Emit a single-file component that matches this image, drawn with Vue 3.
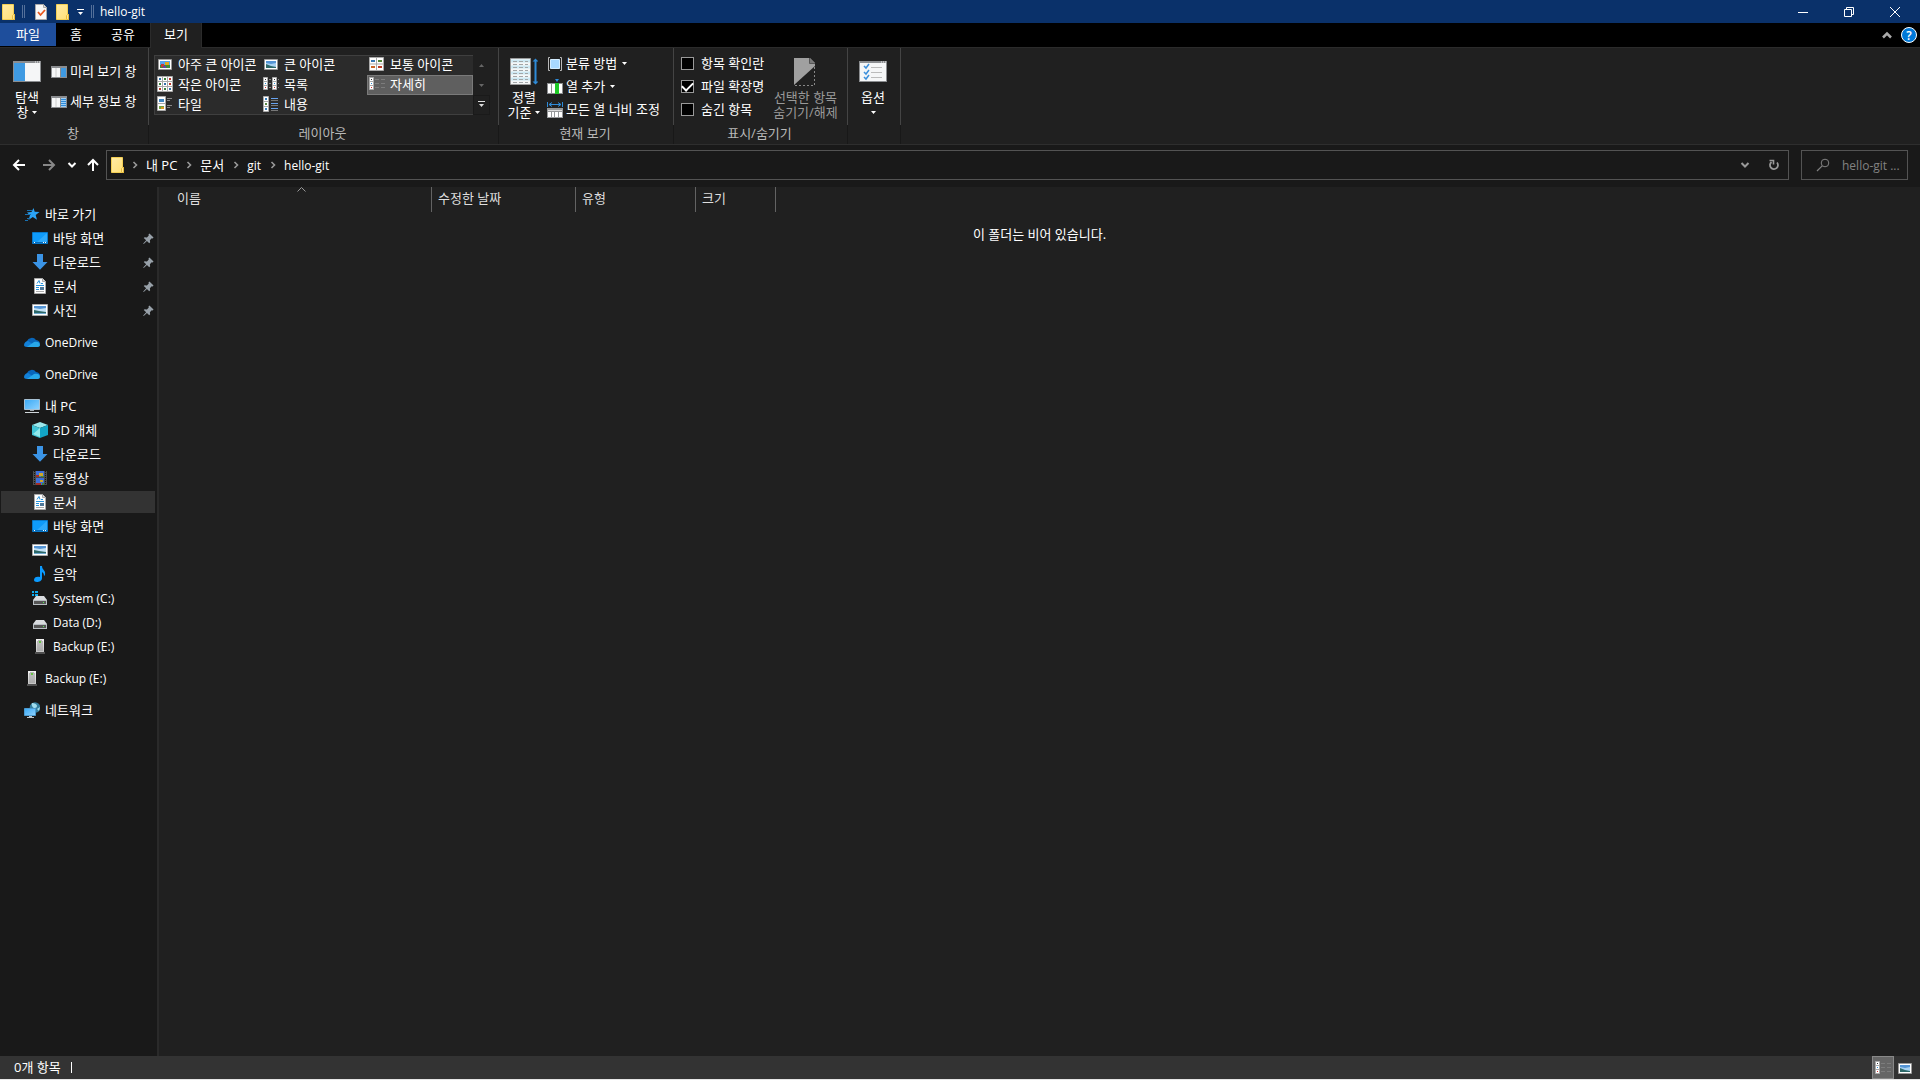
<script setup>
import { ref } from 'vue'

const tabs = ['파일', '홈', '공유', '보기']
const activeTab = ref('보기')

const layouts = [
  { name: '아주 큰 아이콘', icon: 'xl' },
  { name: '큰 아이콘', icon: 'large' },
  { name: '보통 아이콘', icon: 'medium' },
  { name: '작은 아이콘', icon: 'small' },
  { name: '목록', icon: 'list' },
  { name: '자세히', icon: 'details' },
  { name: '타일', icon: 'tiles' },
  { name: '내용', icon: 'content' },
]
const layout = ref('자세히')

const options = ref([
  { name: '항목 확인란', checked: false },
  { name: '파일 확장명', checked: true },
  { name: '숨긴 항목', checked: false },
])

const path = [
  { name: '내 PC' },
  { name: '문서' },
  { name: 'git', latin: true },
  { name: 'hello-git', latin: true },
]

const tree = [
  {
    name: '바로 가기',
    icon: 'star',
    children: [
      { name: '바탕 화면', icon: 'desktop', pinned: true },
      { name: '다운로드', icon: 'download', pinned: true },
      { name: '문서', icon: 'document', pinned: true },
      { name: '사진', icon: 'picture', pinned: true },
    ],
  },
  { name: 'OneDrive', icon: 'cloud', latin: true },
  { name: 'OneDrive', icon: 'cloud', latin: true },
  {
    name: '내 PC',
    icon: 'pc',
    children: [
      { name: '3D 개체', icon: 'cube' },
      { name: '다운로드', icon: 'download' },
      { name: '동영상', icon: 'video' },
      { name: '문서', icon: 'document', current: true },
      { name: '바탕 화면', icon: 'desktop' },
      { name: '사진', icon: 'picture' },
      { name: '음악', icon: 'music' },
      { name: 'System (C:)', icon: 'system', latin: true },
      { name: 'Data (D:)', icon: 'drive', latin: true },
      { name: 'Backup (E:)', icon: 'usb', latin: true },
    ],
  },
  { name: 'Backup (E:)', icon: 'usb', latin: true },
  { name: '네트워크', icon: 'network' },
]
</script>

<template>
  <svg class="sprite" aria-hidden="true">
    <defs>
      <linearGradient id="blue" x1="0" y1="0" x2="1" y2="1">
        <stop offset="0" stop-color="#3aa9f5" />
        <stop offset="1" stop-color="#8fd3ff" />
      </linearGradient>
      <linearGradient id="yellow" x1="0" y1="0" x2="1" y2="1">
        <stop offset="0" stop-color="#ffeba5" />
        <stop offset="1" stop-color="#ffdf75" />
      </linearGradient>
      <linearGradient id="metal" x1="0" y1="0" x2="0" y2="1">
        <stop offset="0" stop-color="#f4f4f4" />
        <stop offset="1" stop-color="#c4c4c4" />
      </linearGradient>
    </defs>
    <symbol id="folder" viewBox="0 0 16 16">
      <path d="M1.500 .5h11v10h1v5h-12z" fill="url(#yellow)" stroke="#f3cf55" />
      <path d="M11.500 15V11.500l1-1h1v5h-2" fill="#ffe694" stroke="#e8bb3a" />
    </symbol>
    <symbol id="check-doc" viewBox="0 0 16 16">
      <path d="M2.500 .5h8l3 3v12h-11z" fill="#f8f8f8" stroke="#aaa" />
      <path d="M10.500 .5v3h3" fill="#ddd" stroke="#aaa" />
      <path d="M5 8l2.500 3 4.500-5" fill="none" stroke="#e8571e" stroke-width="1.800" />
    </symbol>
    <symbol id="caret" viewBox="0 0 5 3"><path d="M0 0h5L2.500 3z" fill="currentColor" /></symbol>
    <symbol id="chevron-down" viewBox="0 0 10 10">
      <path d="M1.500 3l3.500 3.500L8.500 3" fill="none" stroke="currentColor" stroke-width="2" />
    </symbol>
    <symbol id="chevron-up" viewBox="0 0 10 10">
      <path d="M1 7.500l4-4 4 4" fill="none" stroke="currentColor" stroke-width="2.500" />
    </symbol>
    <symbol id="chevron-right" viewBox="0 0 10 10">
      <path d="M3.500 2l3 3-3 3" fill="none" stroke="currentColor" stroke-width="1.600" />
    </symbol>
    <symbol id="arrow" viewBox="0 0 14 14">
      <path d="M13 7H2M7 2L2 7l5 5" fill="none" stroke="currentColor" stroke-width="2" />
    </symbol>
    <symbol id="refresh" viewBox="0 0 12 12">
      <path d="M3.500 3a4 4 0 1 0 5.500 .5" fill="none" stroke="currentColor" stroke-width="1.800" />
      <path d="M1.500 1.500h4v4" fill="none" stroke="currentColor" stroke-width="1.600" />
    </symbol>
    <symbol id="search" viewBox="0 0 14 14">
      <circle cx="9" cy="5" r="3.800" fill="none" stroke="currentColor" />
      <path d="M6.200 7.800L1 13" stroke="currentColor" stroke-width="1.200" />
    </symbol>
    <symbol id="pin" viewBox="0 0 12 12">
      <path d="M7 .5l4.500 4.500-1 1-1-.2-2 2.200.3 2.200-1 1-2.500-2.500L.8 12l-.6-.6L3.500 8 .8 5.500l1-1 2.500.3 2-2L6 1.500z" fill="#98a1a9" />
    </symbol>

    <symbol id="nav-pane" viewBox="0 0 28 21">
      <path d="M0 0h28v21H0z" fill="#8b8d90" />
      <path d="M1 2h11v18H1z" fill="#3f9ae2" />
      <path d="M12 2h15v18H12z" fill="#f5f6f7" />
      <path d="M22 1h1M24 1h1M26 1h1" stroke="#eee" />
    </symbol>
    <symbol id="preview-pane" viewBox="0 0 16 12">
      <path d="M0 0h16v12H0z" fill="#8b8d90" />
      <path d="M1 2h4v9H1zM5 2h4v9H5z" fill="#f5f6f7" />
      <path d="M5 2v9" stroke="#ccc" />
      <path d="M10 2h5v9h-5z" fill="#3f9ae2" />
    </symbol>
    <symbol id="detail-pane" viewBox="0 0 16 12">
      <path d="M0 0h16v12H0z" fill="#8b8d90" />
      <path d="M1 2h4v9H1zM5 2h4v9H5z" fill="#f5f6f7" />
      <path d="M5 2v9" stroke="#ccc" />
      <path d="M10 2h5v9h-5z" fill="#9fd0f6" />
      <path d="M10 3.500h5M10 5.500h5M10 7.500h5M10 9.500h5" stroke="#2f8ad8" />
    </symbol>
    <symbol id="sort" viewBox="0 0 28 28">
      <path d="M.5 .5h20v26H.5z" fill="#f5f6f7" stroke="#9b9b9b" />
      <path d="M1 3h19M1 9h19M1 15h19M1 21h19" stroke="#cde9f4" stroke-width="3" />
      <path d="M3 3.500h15M3 6.500h15M3 9.500h15M3 12.500h15M3 15.500h15M3 18.500h15M3 21.500h15M3 24.500h15" stroke="#a2a6a8" stroke-dasharray="4 2" />
      <path d="M25.500 2v23" stroke="#2e8bd8" stroke-width="2" />
      <path d="M22.500 3.500l3-3 3 3zM22.500 23.500l3 3 3-3z" fill="#2e8bd8" />
    </symbol>
    <symbol id="group" viewBox="0 0 16 16">
      <path d="M3 1.500H1.500v13H3M13 1.500h1.500v13H13" fill="none" stroke="#b9b9b9" />
      <path d="M3.500 3.500h9v9h-9z" fill="#a8d8ff" stroke="#d3ecff" />
    </symbol>
    <symbol id="add-column" viewBox="0 0 16 16">
      <path d="M0 4h16v11H0z" fill="#8b8d90" />
      <path d="M1 5h3v9H1zM5 5h3v9H5zM12 5h3v9h-3z" fill="#fff" />
      <path d="M8 4h4v11H8z" fill="#20c927" />
      <path d="M8 0h4l-2 3z" fill="#2e8bd8" />
    </symbol>
    <symbol id="fit-columns" viewBox="0 0 16 16">
      <path d="M.5 0v5M15.500 0v5M2 2.500h12M5 .5l-3 2 3 2M11 .5l3 2-3 2" fill="none" stroke="#2e8bd8" />
      <path d="M0 6h16v10H0z" fill="#96989a" />
      <path d="M1 10h3v5H1zM5 10h2v5H5zM8 10h3v5H8zM12 10h3v5h-3z" fill="#fff" />
      <path d="M1 8.500h14" stroke="#ddd" />
    </symbol>
    <symbol id="hide-doc" viewBox="0 0 22 28">
      <path d="M0 0h16l5 5v3L0 27z" fill="#a0a0a0" />
      <path d="M15.500 0v5.500H21" fill="#777" stroke="#555" />
      <path d="M20.500 9v18M1 27.500h20" stroke="#888" stroke-dasharray="2 2" />
    </symbol>
    <symbol id="options" viewBox="0 0 28 21">
      <path d="M0 0h28v21H0z" fill="#8b8d90" />
      <path d="M1 2h26v18H1z" fill="#f5f6f7" />
      <path d="M5 5l2 2 3-4M5 11l2 2 3-4M5 16l2 2 3-4" fill="none" stroke="#3c8fdb" stroke-width="1.500" />
      <path d="M12 6.500h11M12 11.500h11M12 16.500h11" stroke="#bbb" />
      <path d="M22 1h1M24 1h1M26 1h1" stroke="#eee" />
    </symbol>

    <symbol id="xl" viewBox="0 0 16 16">
      <path d="M1.500 3.500h13v10h-13z" fill="#fff" stroke="#999" />
      <path d="M3 5h10v7H3z" fill="#58a4ee" />
      <path d="M3 9h10v3H3z" fill="#3f8b38" />
      <path d="M4 8h3v3H4z" fill="#cb3b32" />
      <path d="M8 6h4v3H8z" fill="#e4a91c" />
      <path d="M6 10h3v2H6z" fill="#6740a5" />
    </symbol>
    <symbol id="large" viewBox="0 0 16 16">
      <path d="M1.500 3.500h13v10h-13z" fill="#fff" stroke="#999" />
      <path d="M3 5h10v7H3z" fill="#a9d2f2" />
      <path d="M3 5h10v2L8 8 3 7z" fill="#5595d5" />
      <path d="M3 8l5 2 5 1v1H3z" fill="#2d6969" />
    </symbol>
    <symbol id="picture" viewBox="0 0 16 16">
      <path d="M.5 2.500h15v11H.5z" fill="#fff" stroke="#aaa" />
      <path d="M2 4h12v8H2z" fill="#c4e2f6" />
      <path d="M2 4h12v2L8 7 2 6z" fill="#5595d5" />
      <path d="M2 8l5 1 7 1v1H2z" fill="#2d6969" />
      <path d="M2 11h12v1H2z" fill="#6fa9cf" />
    </symbol>
    <symbol id="medium" viewBox="0 0 16 16">
      <path d="M.5 1.500h14v13H.5zM7.500 1v13M1 8h14" fill="#fff" stroke="#aaa" />
      <path d="M2 4h4v2H2z" fill="#3979b5" />
      <path d="M9 4h4v2H9z" fill="#528538" />
      <path d="M2 10h4v2H2z" fill="#cb6729" />
      <path d="M9 10h4v2H9z" fill="#b93c28" />
    </symbol>
    <symbol id="small" viewBox="0 0 16 16">
      <path d="M.5 .5h15v15H.5zM5.500 0v16M10.500 0v16M0 5.500h16M0 10.500h16" fill="#fff" stroke="#aaa" />
      <path d="M2 2h2v2H2zM7 7h2v2H7zM12 12h2v2h-2z" fill="#3270a5" />
      <path d="M7 2h2v2H7zM2 7h2v2H2zM7 12h2v2H7z" fill="#3a8139" />
      <path d="M12 2h2v2h-2zM12 7h2v2h-2zM2 12h2v2H2z" fill="#ba382c" />
    </symbol>
    <symbol id="list" viewBox="0 0 16 16">
      <path d="M.5 1.500h4v12h-4zM9.500 1.500h4v12h-4z" fill="#fff" stroke="#aaa" />
      <path d="M0 5.500h5M0 9.500h5M9 5.500h5M9 9.500h5" stroke="#aaa" />
      <path d="M2 3h1v1H2zM11 3h1v1h-1z" fill="#333" />
      <path d="M2 7h1v1H2zM11 7h1v1h-1z" fill="#298bd4" />
      <path d="M2 11h1v1H2zM11 11h1v1h-1z" fill="#d23030" />
      <path d="M6 3.500h2M6 7.500h2M6 11.500h2M15 3.500h1M15 7.500h1M15 11.500h1" stroke="#888" />
    </symbol>
    <symbol id="details" viewBox="0 0 16 16">
      <path d="M.5 1.500h4v12h-4zM0 5.500h5M0 9.500h5" fill="#fff" stroke="#aaa" />
      <path d="M2 3h1v1H2z" fill="#333" />
      <path d="M2 7h1v1H2z" fill="#298bd4" />
      <path d="M2 11h1v1H2z" fill="#d23030" />
      <path d="M6 3.500h4M12 3.500h4M6 7.500h4M12 7.500h4M6 11.500h4M12 11.500h4" stroke="#7c7c7c" />
    </symbol>
    <symbol id="tiles" viewBox="0 0 16 16">
      <path d="M.5 .5h8v14h-8zM0 7.500h9" fill="#fff" stroke="#aaa" />
      <path d="M2 3h5v3H2z" fill="#4187c2" />
      <path d="M2 10h5v3H2z" fill="#73a142" />
      <path d="M4 11h3v2H4z" fill="#dc9b26" />
      <path d="M10 2.500h5M10 4.500h3M10 9.500h5M10 11.500h3" stroke="#888" />
    </symbol>
    <symbol id="content" viewBox="0 0 16 16">
      <path d="M.5 .5h5v15h-5zM0 5.500h6M0 10.500h6" fill="#fff" stroke="#aaa" />
      <path d="M2 2h2v2H2zM2 12h2v2H2z" fill="#377fbe" />
      <path d="M2 7h2v2H2z" fill="#568643" />
      <path d="M8 2.500h7M8 7.500h7M8 12.500h7" stroke="#68a3ef" />
      <path d="M8 4.500h7M8 9.500h7M8 14.500h7" stroke="#777" />
    </symbol>

    <symbol id="star" viewBox="0 0 16 16">
      <path d="M9.500 2l1.200 3.800 4.800.2-3.800 3 1.300 4.800-4.200-2.800L4.500 14l1.500-4.800L3 6.500l4.500-.5z" fill="#2ba4f7" />
      <path d="M3 4.500h5M1 8.500h6M3 12.500h3M1 14.500h3" stroke="#1870b0" />
    </symbol>
    <symbol id="desktop" viewBox="0 0 16 16">
      <path d="M.5 2.500h15v11H.5z" fill="#0f9bfa" stroke="#0878c9" />
      <path d="M15 3L5 12h10z" fill="#2eaafc" />
      <path d="M1 12.500h14" stroke="#0869b5" />
      <path d="M2 12.500h1M11 12.500h1M13 12.500h1" stroke="#fff" />
    </symbol>
    <symbol id="download" viewBox="0 0 16 16">
      <path d="M5 0h6v8h4.500L8 15.800.5 8H5z" fill="#3b94e6" />
    </symbol>
    <symbol id="document" viewBox="0 0 16 16">
      <path d="M2.500 .5h8l3 3v12h-11z" fill="#fff" stroke="#aaa" />
      <path d="M10.500 .5v3h3" fill="#ddd" stroke="#aaa" />
      <path d="M5 5.500l2-3 1 3M9 5.500h2M4 7.500h8M4 9.500h3M4 11.500h3" fill="none" stroke="#2793dc" />
      <path d="M4 13.500h8" stroke="#aaa" />
      <path d="M8 9h4v3H8z" fill="#51799a" />
    </symbol>
    <symbol id="cloud" viewBox="0 0 16 16">
      <path d="M3 7a5 4.500 0 0 1 9-1c3 .5 4 2 4 4L7 13z" fill="#0866bb" />
      <path d="M0 11c0-2 2-4 4-4l9 6H3c-2 0-3-1-3-2z" fill="#1280d8" />
      <path d="M3 13l7-5c3-1 6 0 6 3 0 1-1 2-2 2z" fill="#28a8ea" />
    </symbol>
    <symbol id="pc" viewBox="0 0 16 16">
      <path d="M.5 1.500h15v10H.5z" fill="url(#blue)" stroke="#a7c1d4" />
      <path d="M6 12h4v1H6z" fill="#a5adb3" />
      <path d="M1 14.500h14" stroke="#cfd5d9" />
    </symbol>
    <symbol id="cube" viewBox="0 0 16 16">
      <path d="M8 0l8 3-8 3-8-3z" fill="#9ae8ec" />
      <path d="M0 3l8 3v10l-8-3z" fill="#40c5d6" />
      <path d="M16 3L8 6v10l8-3z" fill="#12a4c5" />
      <path d="M1 12l7-6v9z" fill="#92e9eb" />
    </symbol>
    <symbol id="video" viewBox="0 0 16 16">
      <path d="M1 1h14v14H1z" fill="#4c4c4c" />
      <path d="M2.500 1v14M13.500 1v14" stroke="#141414" stroke-dasharray="1 1" />
      <path d="M4 1h8v6H4zM4 8h8v7H4z" fill="#3d6fd8" />
      <path d="M4 5h3v2H4zM4 13h5v2H4z" fill="#a52d27" />
      <path d="M7 3h4v3H7zM8 10h3v2H8z" fill="#d0a727" />
      <path d="M9 6h3v1H9zM10 13h2v2h-2z" fill="#3f8b38" />
    </symbol>
    <symbol id="music" viewBox="0 0 16 16">
      <path d="M8 0h2c0 4 4 4 3 9l-1 1c0-3-1-3-2-4v6c0 3-3 4-5 4s-3-1-3-2c0-3 3-4 6-3z" fill="#0b9bff" />
    </symbol>
    <symbol id="drive" viewBox="0 0 16 16">
      <path d="M4 6h8l3 4H1z" fill="#d9dcdf" />
      <path d="M1 10h14v5H1z" fill="#b8bec2" />
      <path d="M2 11h12v3H2z" fill="#555" />
      <path d="M11 12h1v1h-1z" fill="#55f055" />
    </symbol>
    <symbol id="system" viewBox="0 0 16 16">
      <path d="M4 6h8l3 4H1z" fill="#d9dcdf" />
      <path d="M1 10h14v5H1z" fill="#b8bec2" />
      <path d="M2 11h12v3H2z" fill="#555" />
      <path d="M11 12h1v1h-1z" fill="#55f055" />
      <path d="M0 1h2v2H0zM3 1h3v2H3zM0 4h2v2H0zM3 4h3v2H3z" fill="#10aef2" />
    </symbol>
    <symbol id="usb" viewBox="0 0 16 16">
      <path d="M4 1h8v13H4z" fill="url(#metal)" />
      <path d="M6 13V4M8 13V5M10 13V4" fill="none" stroke="#909090" />
      <path d="M6 2h4v1h1v2h-1V4H6v1H5V3h1z" fill="#b5b5b5" />
      <path d="M7 3h2v2H7z" fill="#65c342" />
      <path d="M3 15h10" stroke="#888" />
    </symbol>
    <symbol id="network" viewBox="0 0 16 16">
      <circle cx="11" cy="5.500" r="5.300" fill="#347e9e" />
      <path d="M8 1c2 0 5 1 5 3s-2 2-3 2-3-3-2-5zM13 7l3-2-1 4z" fill="#a0dcee" />
      <path d="M.5 6.500h11v7H.5z" fill="url(#blue)" stroke="#4b9bd1" />
      <path d="M5 14h3v1h2v1H3v-1h2z" fill="#bcc6cc" />
    </symbol>
  </svg>

  <div class="explorer">
    <header class="titlebar">
      <svg class="icon"><use href="#folder" /></svg>
      <span class="grip"></span>
      <button class="quick" aria-label="속성"><svg class="icon"><use href="#check-doc" /></svg></button>
      <button class="quick" aria-label="새 폴더"><svg class="icon"><use href="#folder" /></svg></button>
      <button aria-label="빠른 실행 도구 모음 사용자 지정">
        <svg viewBox="0 0 7 6" width="7" height="6"><path d="M0 .5h7" stroke="#fff" /><path d="M1 3h5L3.500 6z" fill="#fff" /></svg>
      </button>
      <span class="grip last"></span>
      <h1 class="title latin">hello-git</h1>
      <div class="window-buttons">
        <button aria-label="최소화"><svg viewBox="0 0 10 10"><path d="M0 5.500h10" /></svg></button>
        <button aria-label="이전 크기로 복원"><svg viewBox="0 0 10 10"><path d="M.5 2.500h7v7h-7zM2.500 2V.5h7v7H8" /></svg></button>
        <button aria-label="닫기"><svg viewBox="0 0 10 10"><path d="M0 0l10 10M10 0L0 10" /></svg></button>
      </div>
    </header>

    <nav class="tabs">
      <button
        v-for="tab in tabs"
        :key="tab"
        class="tab"
        :class="{ file: tab === '파일', active: tab === activeTab }"
        @click="activeTab = tab"
      >
        {{ tab }}
      </button>
      <div class="tab-tools">
        <button aria-label="리본 최소화"><svg class="tiny"><use href="#chevron-up" /></svg></button>
        <button class="help" aria-label="도움말">?</button>
      </div>
    </nav>

    <section class="ribbon">
      <div class="group group-panes">
        <div class="group-body">
          <button class="big">
            <span class="big-icon"><svg width="28" height="21"><use href="#nav-pane" /></svg></span>
            <span>탐색</span>
            <span>창 <svg class="caret"><use href="#caret" /></svg></span>
          </button>
          <div class="stack panes">
            <button class="small"><svg width="16" height="12"><use href="#preview-pane" /></svg>미리 보기 창</button>
            <button class="small"><svg width="16" height="12"><use href="#detail-pane" /></svg>세부 정보 창</button>
          </div>
        </div>
        <p class="group-label">창</p>
      </div>

      <div class="group group-layout">
        <div class="group-body">
          <div class="gallery">
            <button
              v-for="item in layouts"
              :key="item.name"
              class="layout"
              :class="{ selected: item.name === layout }"
              @click="layout = item.name"
            >
              <svg class="icon"><use :href="'#' + item.icon" /></svg>{{ item.name }}
            </button>
          </div>
          <div class="gallery-scroll">
            <button class="flip" aria-label="위로"><svg class="caret"><use href="#caret" /></svg></button>
            <button aria-label="아래로"><svg class="caret"><use href="#caret" /></svg></button>
            <button class="more" aria-label="자세히">
              <svg viewBox="0 0 7 6" width="7" height="6"><path d="M0 .5h7" stroke="#ddd" /><path d="M1 3h5L3.500 6z" fill="#ddd" /></svg>
            </button>
          </div>
        </div>
        <p class="group-label">레이아웃</p>
      </div>

      <div class="group group-view">
        <div class="group-body">
          <button class="big">
            <span class="big-icon"><svg width="28" height="28"><use href="#sort" /></svg></span>
            <span>정렬</span>
            <span>기준 <svg class="caret"><use href="#caret" /></svg></span>
          </button>
          <div class="stack">
            <button class="small"><svg class="icon"><use href="#group" /></svg>분류 방법 <svg class="caret"><use href="#caret" /></svg></button>
            <button class="small"><svg class="icon"><use href="#add-column" /></svg>열 추가 <svg class="caret"><use href="#caret" /></svg></button>
            <button class="small"><svg class="icon"><use href="#fit-columns" /></svg>모든 열 너비 조정</button>
          </div>
        </div>
        <p class="group-label">현재 보기</p>
      </div>

      <div class="group group-show">
        <div class="group-body">
          <div class="stack">
            <label v-for="option in options" :key="option.name" class="check">
              <input v-model="option.checked" type="checkbox" />{{ option.name }}
            </label>
          </div>
          <button class="big" disabled>
            <span class="big-icon"><svg width="22" height="28"><use href="#hide-doc" /></svg></span>
            <span>선택한 항목</span>
            <span>숨기기/해제</span>
          </button>
        </div>
        <p class="group-label">표시/숨기기</p>
      </div>

      <div class="group group-options">
        <div class="group-body">
          <button class="big">
            <span class="big-icon"><svg width="28" height="21"><use href="#options" /></svg></span>
            <span>옵션</span>
            <span><svg class="caret"><use href="#caret" /></svg></span>
          </button>
        </div>
      </div>
    </section>

    <div class="navbar">
      <div class="history">
        <button aria-label="뒤로"><svg class="arrow"><use href="#arrow" /></svg></button>
        <button aria-label="앞으로" disabled><svg class="arrow forward"><use href="#arrow" /></svg></button>
        <button class="recent" aria-label="최근 위치"><svg class="tiny"><use href="#chevron-down" /></svg></button>
        <button class="parent" aria-label="위로"><svg class="arrow up"><use href="#arrow" /></svg></button>
      </div>
      <div class="address">
        <svg class="icon"><use href="#folder" /></svg>
        <div class="crumbs">
          <template v-for="part in path" :key="part.name">
            <span class="crumb-sep"><svg class="tiny"><use href="#chevron-right" /></svg></span>
            <a href="#" class="crumb" :class="{ latin: part.latin }">{{ part.name }}</a>
          </template>
        </div>
        <div class="address-tools">
          <button aria-label="이전 위치"><svg class="tiny"><use href="#chevron-down" /></svg></button>
          <button aria-label="새로 고침"><svg width="12" height="12"><use href="#refresh" /></svg></button>
        </div>
      </div>
      <label class="search">
        <svg width="14" height="14"><use href="#search" /></svg>
        <input class="latin" type="text" placeholder="hello-git ..." aria-label="hello-git 검색" />
      </label>
    </div>

    <main class="body">
      <aside class="sidebar">
        <ul v-for="(root, i) in tree" :key="i" class="branch">
          <li>
            <a href="#" class="node" :class="{ latin: root.latin }">
              <svg class="icon"><use :href="'#' + root.icon" /></svg>{{ root.name }}
            </a>
          </li>
          <li v-for="child in root.children" :key="child.name">
            <a href="#" class="node child" :class="{ latin: child.latin, current: child.current }">
              <svg class="icon"><use :href="'#' + child.icon" /></svg>{{ child.name }}
              <svg v-if="child.pinned" class="pin"><use href="#pin" /></svg>
            </a>
          </li>
        </ul>
      </aside>

      <section class="files">
        <table class="columns">
          <thead>
            <tr>
              <th class="col-name">
                이름
                <svg class="sort-mark" viewBox="0 0 9 5"><path d="M.5 4.500l4-4 4 4" /></svg>
              </th>
              <th class="col-date">수정한 날짜</th>
              <th class="col-type">유형</th>
              <th class="col-size">크기</th>
            </tr>
          </thead>
        </table>
        <p class="empty">이 폴더는 비어 있습니다.</p>
      </section>
    </main>

    <footer class="statusbar">
      <span class="count">0개 항목</span>
      <span class="divider"></span>
      <div class="view-switch">
        <button class="selected" aria-label="자세히"><svg class="icon"><use href="#details" /></svg></button>
        <button aria-label="큰 아이콘"><svg class="icon"><use href="#large" /></svg></button>
      </div>
    </footer>
  </div>
</template>

<style>
body {
  margin: 0;
  background: #202020;
}
</style>

<style scoped>
.sprite {
  position: absolute;
  width: 0;
  height: 0;
}

.explorer {
  display: flex;
  flex-direction: column;
  min-height: 100vh;
  box-sizing: border-box;
  border-bottom: 1px solid #e6e6e6;
  background: #202020;
  color: #fff;
  font-family: 'Open Sans', 'Noto Sans CJK KR', sans-serif;
  font-size: 13px;
  line-height: 15px;
}

.explorer * {
  box-sizing: border-box;
}

.latin {
  font-size: 12px;
}

button {
  display: flex;
  align-items: center;
  justify-content: center;
  margin: 0;
  padding: 0;
  border: 0;
  background: none;
  color: inherit;
  font: inherit;
  white-space: nowrap;
}

a {
  color: inherit;
  text-decoration: none;
}

svg {
  flex: none;
}

.icon {
  width: 16px;
  height: 16px;
}

.tiny {
  width: 10px;
  height: 10px;
}

.caret {
  width: 5px;
  height: 3px;
}

/* title bar */
.titlebar {
  display: flex;
  align-items: center;
  height: 23px;
  padding-left: 1px;
  background: #0a316a;
}

.grip {
  width: 3px;
  height: 13px;
  margin: 0 8px 0 5px;
  border: solid #54709a;
  border-width: 0 1px;
}

.grip.last {
  margin: 0 6px 0 7px;
}

.quick {
  margin-right: 6px;
}

.title {
  margin: 0;
  font-weight: 400;
}

.window-buttons {
  display: flex;
  margin: 0 2px 0 auto;
}

.window-buttons button {
  width: 46px;
  height: 21px;
}

.window-buttons svg {
  width: 10px;
  height: 10px;
  overflow: visible;
  fill: none;
  stroke: #fff;
}

/* tabs */
.tabs {
  display: flex;
  height: 25px;
  background: #000;
  border-bottom: 1px solid #2b2b2b;
}

.tab {
  width: 54px;
  height: 23px;
}

.tab:nth-child(2) {
  width: 40px;
}

.tab.file {
  width: 56px;
  background: #1e4e9c;
}

.tab.active {
  width: 52px;
  height: 25px;
  padding-bottom: 2px;
  border: solid #2b2b2b;
  border-width: 0 1px;
  background: #202020;
}

.tab-tools {
  display: flex;
  align-items: center;
  gap: 9px;
  margin: 0 3px 0 auto;
  color: #aaa;
}

.help {
  width: 16px;
  height: 16px;
  border: 1px solid #fff;
  border-radius: 50%;
  background: #0078d7;
  color: #fff;
  font-size: 12px;
  font-weight: 600;
}

/* ribbon */
.ribbon {
  display: flex;
  height: 97px;
  border-bottom: 1px solid #2e2e2e;
}

.group {
  display: flex;
  flex-direction: column;
  padding-top: 2px;
  border-right: 1px solid;
  border-image: linear-gradient(#444 76px, #181818 76px) 1;
}

.group-panes {
  width: 149px;
}

.group-layout {
  width: 350px;
}

.group-view {
  width: 175px;
}

.group-show {
  width: 174px;
}

.group-options {
  width: 53px;
}

.group-body {
  display: flex;
  height: 76px;
  padding: 5px 0 0 8px;
}

.group-view .group-body {
  padding-left: 6px;
}

.group-options .group-body {
  justify-content: center;
  padding: 5px 2px 0 0;
}

.group-label {
  margin: 0;
  padding-right: 2px;
  text-align: center;
  color: #b8b8b8;
}

.big {
  flex-direction: column;
  justify-content: flex-start;
  min-width: 38px;
}

.big:disabled {
  margin-left: 9px;
  color: #999;
}

.big span {
  display: flex;
  align-items: center;
  gap: 4px;
  height: 15px;
}

.big .big-icon {
  justify-content: center;
  height: 35px;
  padding-bottom: 2px;
}

.stack {
  display: flex;
  flex-direction: column;
  align-items: flex-start;
  padding-left: 4px;
}

.small {
  gap: 3px;
  height: 23px;
  margin-top: -3px;
  margin-bottom: 3px;
}

.small .caret {
  margin-left: 2px;
}

.stack.panes {
  gap: 7px;
  padding-top: 8px;
  padding-left: 5px;
}

.check {
  display: flex;
  align-items: center;
  gap: 7px;
  height: 23px;
  margin-top: -3px;
  margin-bottom: 3px;
  white-space: nowrap;
}

.group-show .group-body {
  padding-left: 3px;
}

.check input {
  display: grid;
  place-content: center;
  width: 13px;
  height: 13px;
  margin: 0;
  border: 1px solid #999;
  background: #000;
  appearance: none;
}

.check input:checked::after {
  content: '';
  width: 5px;
  height: 9px;
  margin-bottom: 2px;
  border: solid #fff;
  border-width: 0 2px 2px 0;
  transform: rotate(45deg);
}

.group-layout .group-body {
  padding-left: 5px;
}

.gallery {
  display: grid;
  grid-template-columns: repeat(3, 106px);
  grid-auto-rows: 20px;
  height: 60px;
  border: 1px solid #3f3f3f;
  border-right: 0;
  background: #2b2b2b;
}

.layout {
  justify-content: flex-start;
  gap: 5px;
  height: 20px;
  margin-top: -1px;
  padding-left: 2px;
  padding-bottom: 2px;
}

.layout.selected {
  border: 1px solid #7a7a7a;
  background: #5f5f5f;
  padding-left: 1px;
}

.gallery-scroll {
  display: flex;
  flex-direction: column;
  color: #666;
}

.gallery-scroll button {
  width: 17px;
  height: 20px;
}

.gallery-scroll .flip svg {
  transform: rotate(180deg);
}

.gallery-scroll .more {
  padding-bottom: 2px;
  border: 1px solid #1a1a1a;
}

/* address row */
.navbar {
  display: flex;
  align-items: center;
  height: 42px;
  padding-bottom: 2px;
  padding-right: 12px;
  background: #191919;
}

.history {
  display: flex;
  align-items: center;
  width: 106px;
  padding-left: 12px;
}

.arrow {
  width: 14px;
  height: 14px;
}

.history button:disabled {
  margin-left: 16px;
  color: #888;
}

.forward {
  transform: rotate(180deg);
}

.up {
  transform: rotate(90deg);
}

.recent {
  margin-left: 11px;
}

.parent {
  margin-left: 9px;
}

.address {
  display: flex;
  flex: 1;
  align-items: center;
  height: 30px;
  padding-left: 3px;
  border: 1px solid #535353;
}

.crumbs {
  display: flex;
  align-items: center;
  margin-left: -2px;
}

.crumb-sep {
  display: flex;
  justify-content: center;
  width: 22px;
  color: #999;
}

.crumb {
  margin-right: 1px;
}

.address-tools {
  display: flex;
  align-self: stretch;
  margin-left: auto;
  color: #999;
}

.address-tools button {
  width: 29px;
}

.search {
  display: flex;
  align-items: center;
  width: 107px;
  height: 30px;
  margin-left: 12px;
  padding-left: 14px;
  border: 1px solid #535353;
  color: #828282;
}

.search input {
  width: 70px;
  margin-left: 12px;
  padding: 0;
  border: 0;
  outline: 0;
  background: none;
  color: #fff;
  font-family: inherit;
}

.search input::placeholder {
  color: #828282;
  opacity: 1;
}

/* content */
.body {
  display: flex;
  flex: 1;
}

.sidebar {
  width: 159px;
  padding-top: 15px;
  border-right: 2px solid #2a2a2a;
  background: #191919;
}

.branch {
  margin: 0 0 8px;
  padding: 0;
  list-style: none;
}

.branch li {
  height: 24px;
  padding-top: 1px;
}

.node {
  display: flex;
  align-items: center;
  gap: 5px;
  height: 22px;
  margin: 0 2px 0 1px;
  padding-left: 23px;
}

.node.child {
  padding-left: 31px;
}

.node.current {
  background: #333;
}

.pin {
  width: 11px;
  height: 11px;
  margin: 0 1px 0 auto;
}

.files {
  flex: 1;
}

.columns {
  table-layout: fixed;
  width: 604px;
  margin-left: 13px;
  border-collapse: separate;
  border-spacing: 0;
}

.columns th {
  position: relative;
  height: 25px;
  padding: 0 0 2px 6px;
  border-right: 1px solid #636363;
  color: #dedede;
  font-weight: 400;
  text-align: left;
}

.columns .col-name {
  width: 260px;
  padding-left: 5px;
}

.col-date {
  width: 144px;
}

.col-type {
  width: 120px;
}

.col-size {
  width: 80px;
}

.sort-mark {
  position: absolute;
  top: 0;
  left: 125px;
  width: 9px;
  height: 5px;
  fill: none;
  stroke: #999;
}

.empty {
  margin: 15px 0 0;
  text-align: center;
}

/* status bar */
.statusbar {
  display: flex;
  align-items: center;
  height: 23px;
  padding-left: 14px;
  background: #333;
}

.divider {
  width: 1px;
  height: 11px;
  margin-left: 10px;
  background: #fff;
}

.view-switch {
  display: flex;
  margin-left: auto;
  margin-right: 4px;
}

.view-switch button {
  width: 22px;
  height: 23px;
}

.view-switch .selected {
  border: 1px solid #888;
  background: #666;
}
</style>
